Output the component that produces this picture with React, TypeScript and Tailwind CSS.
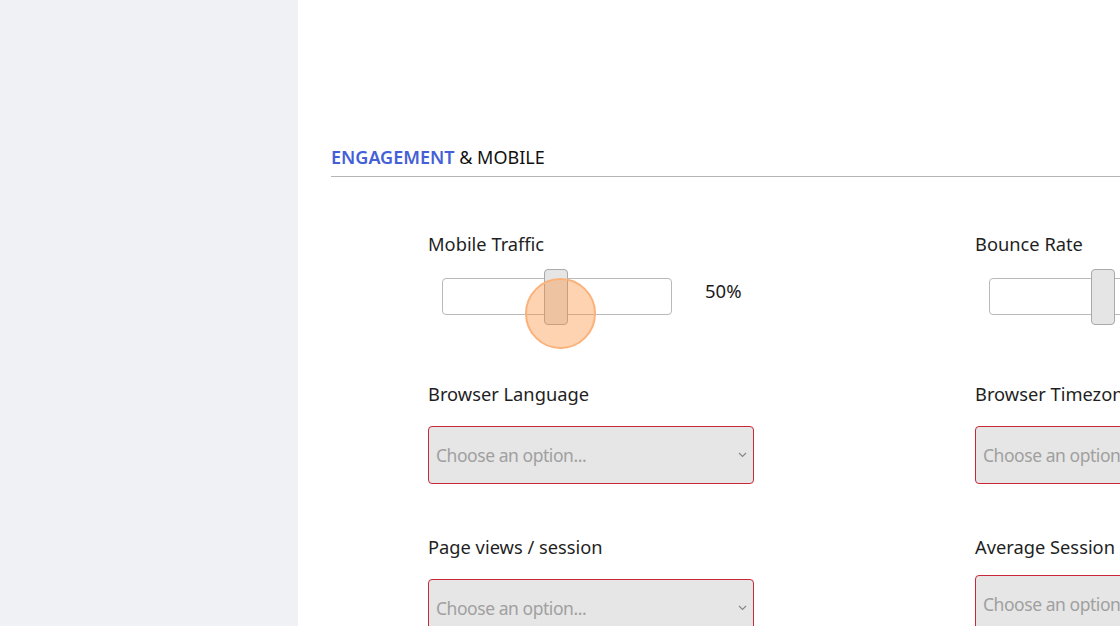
import React from "react";

const font = { fontFamily: '"Noto Sans", "Open Sans", sans-serif' };

function Chevron() {
  return (
    <svg width="9" height="6" viewBox="0 0 9 6" className="shrink-0">
      <path d="M1 1 L4.5 4.5 L8 1" fill="none" stroke="#888" strokeWidth="1.2" />
    </svg>
  );
}

function Select({ mt = "mt-[31px]" }: { mt?: string }) {
  return (
    <div className={`${mt} w-[326px] h-[58px] rounded-[4px] border-[1.5px] border-[#c8283a] bg-[#e6e6e6] flex items-center justify-between pl-[7px] pr-[6px]`}>
      <span className="text-[17.5px] text-[#a0a0a0] tracking-[-0.45px] whitespace-nowrap">Choose an option...</span>
      <Chevron />
    </div>
  );
}

function Slider({ pos, showValue, pointer }: { pos: number; showValue?: boolean; pointer?: boolean }) {
  return (
    <div className="mt-[12px] flex items-center h-[56px]">
      <div className="relative ml-[14px] w-[230px] h-[37px] rounded-[4px] border border-[#b9b9b9] bg-white shrink-0">
        <div
          className="absolute top-[-10px] w-[24px] h-[56px] rounded-[4px] border border-[#a9a9a9] bg-[#e5e5e5]"
          style={{ left: pos }}
        />
        {pointer && (
          <div className="absolute left-[82px] top-[-1px] w-[71px] h-[71px] rounded-full border-2 border-[#fbb27a] bg-[#fb923c]/40" />
        )}
      </div>
      {showValue && <span className="ml-[33px] mt-[-10px] text-[18.5px] text-[#1a1a1a]">50%</span>}
    </div>
  );
}

function Label({ children }: { children: React.ReactNode }) {
  return <div className="text-[18.3px] leading-[24px] text-[#1f1f1f] whitespace-nowrap">{children}</div>;
}

export default function App() {
  return (
    <div className="w-[1120px] h-[626px] overflow-hidden flex bg-white" style={font}>
      <div className="w-[298px] shrink-0 bg-[#eff1f4]" />
      <div className="flex-1 min-w-0 pl-[33px] pt-[145px]">
        <div className="text-[18px] leading-[24px] whitespace-nowrap">
          <span className="font-semibold text-[#4360d8]">ENGAGEMENT</span>
          <span className="text-[#111]"> &amp; MOBILE</span>
        </div>
        <div className="mt-[7px] h-px bg-[#b5b5b5] w-[900px]" />
        <div className="ml-[97px] mt-[55px] grid grid-cols-[547px_547px]">
          <div>
            <Label>Mobile Traffic</Label>
            <Slider pos={101} showValue pointer />
            <div className="mt-[58px]"><Label>Browser Language</Label></div>
            <Select mt="mt-[20px]" />
            <div className="mt-[51px]"><Label>Page views / session</Label></div>
            <Select mt="mt-[20px]" />
          </div>
          <div>
            <Label>Bounce Rate</Label>
            <Slider pos={101} />
            <div className="mt-[58px]"><Label>Browser Timezone</Label></div>
            <Select mt="mt-[20px]" />
            <div className="mt-[51px]"><Label>Average Session Duration</Label></div>
            <Select mt="mt-[16px]" />
          </div>
        </div>
      </div>
    </div>
  );
}
